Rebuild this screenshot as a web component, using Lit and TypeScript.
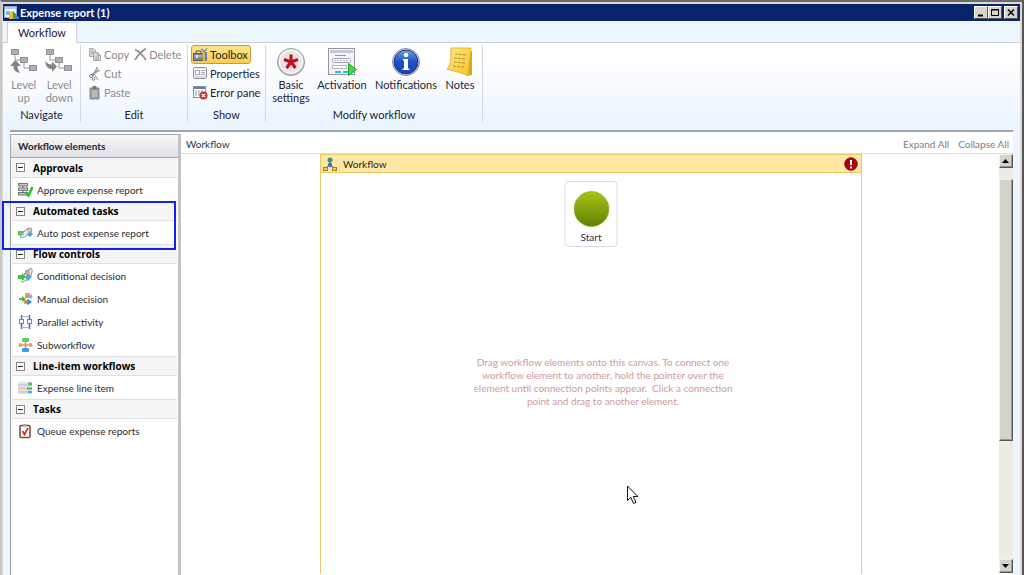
import { LitElement, html, svg, css, TemplateResult } from "lit";
import { customElement, property } from "lit/decorators.js";

const icon = (size: number, body: TemplateResult, box = size) =>
  html`<svg width=${size} height=${size} viewBox="0 0 ${box} ${box}" aria-hidden="true">${body}</svg>`;

const levelTree = svg`<g fill="#adadad" stroke="#929292"><rect x="1.5" y="1.5" width="7" height="5"/><rect x="10.5" y="9.5" width="7" height="5"/><rect x="19.5" y="17.5" width="7" height="5"/></g><path d="M5 7v5h5M14 15v5h5" fill="none" stroke="#999"/>`;

const icons: Record<string, TemplateResult> = {
  app: icon(15, svg`<rect x=".5" y="1.5" width="12" height="11" fill="#f4fbff" stroke="#8fa9d0"/><rect x="1" y="2" width="11" height="2" fill="#a9cdf0"/><rect x="2" y="6" width="4" height="4" fill="#79b4ec"/><path d="M5 14V9l3-3 2 2v6z" fill="#f1b929"/><path d="M9 14V6l3 3v5z" fill="#43a047"/><path d="M12 14v-4l3 2v2z" fill="#3e7bd6"/>`),
  up: icon(28, svg`${levelTree}<path d="M10 25C5 24 3 21 3.500 18H0l5.500-6 5.500 6H7.500c0 3 1 4 2.500 7z" fill="#858585"/>`),
  down: icon(28, svg`${levelTree}<path d="M0 13c1 6 3 8 7 8v3l5-5.500-5-5v3c-3 0-5-1-7-3.500z" fill="#858585"/>`),
  copy: icon(14, svg`<path d="M1.500.5h4l2 2v6h-6z" fill="#d6d6d6" stroke="#aaa"/><path d="M5.500 4.500h4l3 3v5h-7z" fill="#dcdcdc" stroke="#a2a2a2"/><path d="M9.500 4.500v3h3M7 9h4M7 11h4M3 3h2M3 5h2" fill="none" stroke="#a2a2a2"/>`),
  del: icon(13, svg`<path d="M1 1.500c4 2 8 6 11 10.500M12 .5C8 3 4 7 1 12" stroke="#8e8e8e" stroke-width="1.700" fill="none"/>`),
  cut: icon(14, svg`<path d="M9.500 0 5 9M11.500 3 3 8" stroke="#999" stroke-width="1.500"/><path d="m6 7 4 6" stroke="#888"/><circle cx="3" cy="9" r="1.600" fill="none" stroke="#888"/><circle cx="5.500" cy="12" r="1.400" fill="none" stroke="#888"/>`),
  paste: icon(14, svg`<rect x="1.500" y="1.500" width="10" height="12" rx="1" fill="#909090"/><rect x="3.500" y="4" width="6" height="7.500" fill="#b9b9b9"/><rect x="4.500" y="0" width="4" height="3" fill="#777"/>`),
  toolbox: icon(15, svg`<path d="M3 6V4h5v2" fill="none" stroke="#555"/><rect x=".5" y="6.500" width="10" height="7" fill="#7a879b" stroke="#4d5b70"/><path d="M1 9h9" stroke="#c5d0e0"/><rect x="3" y="8" width="2" height="3" fill="#e8e8e8"/><path d="M10.500 14V6" stroke="#e0a020" stroke-width="2"/><path d="M13 14V5" stroke="#5d7fb8" stroke-width="2"/><path d="M8.500 1.500 11 5l3-3.500" stroke="#8090a0" stroke-width="1.500" fill="none"/>`),
  properties: icon(15, svg`<rect x=".5" y="1.500" width="13" height="11" rx="1" fill="#f1f1f5" stroke="#8f8f9b"/><path d="M2.500 4.500h4v4h-4zM8.500 4.500h3M8.500 6.500h3M8.500 8.500h3" fill="#fff" stroke="#a3a3b0"/><path d="M1 11h12" stroke="#c9c9d2"/>`),
  error: icon(15, svg`<rect x=".5" y="1.500" width="12" height="11" fill="#fafcff" stroke="#8791a6"/><rect x="1" y="2" width="11" height="2" fill="#6d7f9f"/><path d="M2 6h2M5 6h2M8 6h2M2 8h2M5 8h2M2 10h2M5 10h2" stroke="#8c9bb5"/><circle cx="10.500" cy="10.500" r="4" fill="#d92c2c"/><path d="m8.800 8.800 3.400 3.400m0-3.400-3.400 3.400" stroke="#fff" stroke-width="1.200"/>`),
  basic: icon(30, svg`<defs><linearGradient id="b" x2="0" y2="1"><stop stop-color="#fdfdfd"/><stop offset="1" stop-color="#b9b9bd"/></linearGradient></defs><circle cx="15" cy="15" r="13.500" fill="url(#b)" stroke="#929298"/><circle cx="15" cy="15" r="11.500" fill="#e6e6e9" stroke="#fff"/><path d="M15 15V7.500M15 15l7-2.500M15 15l4.500 6M15 15l-4.500 6M15 15 8 12.500" stroke="#c30d16" stroke-width="3"/>`),
  activation: icon(30, svg`<rect x="1.500" y="1.500" width="26" height="26" fill="#f4f4f7" stroke="#9496a3"/><rect x="3" y="3" width="23" height="3" fill="#c6c8d2"/><path d="M8 8.500h11" stroke="#999"/><rect x="5.500" y="11.500" width="18" height="4" rx="1" fill="#fff" stroke="#a0a3ae"/><path d="M7 13.500h14" stroke="#b5b5bd" stroke-dasharray="2 1"/><rect x="5.500" y="18.500" width="14" height="3" fill="#fff" stroke="#b5b7c0"/><rect x="8" y="24" width="6" height="2" fill="#13c5ef"/><rect x="16" y="24" width="5" height="2" fill="#13c5ef"/><path d="m21.500 16.500 8 6-8 6z" fill="#43d343" stroke="#1fa52a"/>`),
  notify: icon(30, svg`<defs><linearGradient id="n" x2="0" y2="1"><stop stop-color="#6b9fe6"/><stop offset=".5" stop-color="#1e4fc0"/><stop offset="1" stop-color="#1a43b4"/></linearGradient></defs><circle cx="15" cy="15" r="13.500" fill="#dfe1e8" stroke="#8b8e99"/><circle cx="15" cy="15" r="12" fill="url(#n)" stroke="#1b3990"/><circle cx="15" cy="8" r="2.300" fill="#fff"/><path d="M12 12h5v9.500h1.500V23h-7v-1.500H13v-8h-1z" fill="#fff"/>`),
  notes: icon(30, svg`<defs><linearGradient id="y" x2="1" y2="1"><stop stop-color="#ffe989"/><stop offset="1" stop-color="#f5c226"/></linearGradient></defs><path d="m22 5 5-1v24l-6 1z" fill="#dca51c"/><path d="M6 1h20c-1 9-2 18-3 27L2 22c4-4 4-12 4-21z" fill="url(#y)" stroke="#e6b52b"/><path d="m10 7 11 1M9 11l12 1M9 15l11 1M8 19l11 1" stroke="#b8912f" stroke-dasharray="3 1"/>`),
  approve: icon(16, svg`<g fill="#c4c4c4" stroke="#777"><rect x=".5" y="1.500" width="9" height="2.500"/><rect x=".5" y="6" width="9" height="2.500"/><rect x=".5" y="10.500" width="9" height="2.500"/></g><path d="M5 4v2M5 8v3" stroke="#666"/><path d="m7.500 10 3 3.500L14.500 5" stroke="#25c51d" stroke-width="2.500" fill="none"/>`),
  auto: icon(16, svg`<rect x="0" y="6" width="6" height="4.500" fill="#5fcb45"/><rect x="9" y="3" width="4" height="4" fill="#f5ad78"/><path d="m8 9 4-3 3 3-3 3z" fill="#36aaf0"/><ellipse cx="8" cy="8" rx="7" ry="2.500" transform="rotate(-38 8 8)" fill="#d8dde3" fill-opacity=".5" stroke="#8899a8"/>`),
  cond: icon(16, svg`<rect x="7" y="2" width="5" height="5" fill="#f4a66e"/><path d="m7 9 3-3 4 3-4 4z" fill="#37a6eb"/><path d="M3 14C8 14 15 7 14 2S4 7 5 12" fill="none" stroke="#899eae" stroke-width="1.200"/><path d="M0 7h4V5l4 4-4 4v-2H0z" fill="#3fc53b"/>`),
  manual: icon(16, svg`<rect x="7" y="2" width="5" height="5" fill="#f29456"/><path d="m7 11 3-3 4 3-4 3z" fill="#2d92dc"/><circle cx="12.500" cy="5.500" r="2" fill="#7fb5dd"/><circle cx="7.500" cy="11" r="2" fill="#d88d51"/><path d="M1 7h3V5l4 3-4 3V9H1z" fill="#43bd40"/>`),
  parallel: icon(16, svg`<path d="M3.500 1v14M11.500 1v14" stroke="#3465cf" stroke-width="1.500"/><path d="M3.500 2.500h8M3.500 13.500h8" stroke="#a8b4ca"/><rect x="1.500" y="5.500" width="4" height="4" fill="#eef4ff" stroke="#6687c4"/><rect x="9.500" y="5.500" width="4" height="4" fill="#eef4ff" stroke="#6687c4"/>`),
  sub: icon(16, svg`<rect x="4" y="1" width="7" height="4" rx="1" fill="#5fcb6b"/><path d="M7.500 5v6M3 8h10" stroke="#bf8056"/><circle cx="2.500" cy="8" r="2" fill="#ee9d66"/><circle cx="7.500" cy="8" r="2" fill="#ee9d66"/><circle cx="12.500" cy="8" r="2" fill="#ee9d66"/><rect x="4" y="11" width="7" height="4" rx="1" fill="#35a0e6"/>`),
  line: icon(16, svg`<rect x="0" y="2" width="14" height="12" fill="#dfe5ee"/><path d="M0 5h9M0 12h11" stroke="#c6d2e4" stroke-width="2"/><path d="M0 8.500h9" stroke="#f3c594" stroke-width="2"/><path d="M10 4h4" stroke="#57c257" stroke-width="3"/><path d="M9 8.500h5" stroke="#3cb45a" stroke-width="2"/><path d="M10 12h4" stroke="#4da0ea" stroke-width="2"/>`),
  queue: icon(16, svg`<rect x="2" y="2.500" width="10" height="12" rx="1" fill="#fff" stroke="#7c5138" stroke-width="1.600"/><rect x="5" y="1" width="4" height="3" fill="#a9a9ae"/><path d="m4.500 8 2 3.500L10 5" stroke="#df2020" stroke-width="1.600" fill="none"/>`),
  flow: icon(16, svg`<path d="M8 4v5M3 12l5-3 5 3" stroke="#68829b" fill="none"/><circle cx="8" cy="4" r="2.500" fill="#2a9e63"/><circle cx="8" cy="9" r="2.200" fill="#4067cd"/><rect x="1.500" y="11.500" width="4" height="3" fill="#f6cd62" stroke="#ae7f20"/><rect x="10.500" y="11.500" width="4" height="3" fill="#f6cd62" stroke="#ae7f20"/>`),
  alert: icon(14, svg`<circle cx="7" cy="7" r="6.300" fill="#a8000c" stroke="#820008" stroke-width=".8"/><path d="M7 3v5" stroke="#fff" stroke-width="2"/><path d="M7 9.500v2" stroke="#fff" stroke-width="2"/>`),
  start: icon(36, svg`<defs><linearGradient id="g" x2="0" y2="1"><stop stop-color="#a2c613"/><stop offset="1" stop-color="#628007"/></linearGradient></defs><circle cx="18" cy="18" r="17.500" fill="url(#g)" stroke="#8bac25" stroke-width=".6"/>`),
  minus: icon(9, svg`<rect x=".5" y=".5" width="8" height="8" fill="#fff" stroke="#858585"/><path d="M2 4.500h5" stroke="#222"/>`),
  arrowUp: icon(8, svg`<path d="M0 6h7L3.500 2z" fill="#000"/>`),
  arrowDown: icon(8, svg`<path d="M0 2h7L3.500 6z" fill="#000"/>`),
};

const reset = css`
  * { box-sizing: border-box; }
  button { font: inherit; color: inherit; background: none; border: 0; margin: 0; padding: 0; text-align: inherit; }
  svg { display: block; flex: none; }
`;

@customElement("ribbon-button")
class RibbonButton extends LitElement {
  @property() icon = "";
  @property() label = "";
  @property({ type: Boolean, reflect: true }) large = false;
  @property({ type: Boolean }) disabled = false;
  @property({ type: Boolean }) pressed = false;
  static styles = [reset, css`
    :host { display: block; }
    .button { display: flex; align-items: center; gap: 2px; height: 19px; padding: 0 2px 0 1px; border: 1px solid transparent; border-radius: 3px; color: #1e2330; white-space: nowrap; }
    .large { flex-direction: column; gap: 1px; height: 60px; width: 100%; padding: 0; text-align: center; white-space: pre-line; line-height: 13px; }
    .large .glyph { display: grid; place-items: center; height: 30px; }
    .button:disabled { color: #8b8b8b; }
    .pressed { background: linear-gradient(#ffe58b, #fbce4c); border-color: #c79d3c; }
  `];
  render() {
    return html`<button class="button ${this.large ? "large" : ""} ${this.pressed ? "pressed" : ""}" ?disabled=${this.disabled}>
      <span class="glyph">${icons[this.icon]}</span><span>${this.label}</span></button>`;
  }
}

@customElement("ribbon-bar")
class RibbonBar extends LitElement {
  static styles = [reset, css`
    :host { display: block; background: linear-gradient(#fff 20%, #eaf4ff); padding-bottom: 8px; }
    .groups { display: flex; padding-top: 2px; }
    .group { display: flex; flex-direction: column; justify-content: space-between; height: 77px; border-right: 1px solid #d3d9e3; }
    .title { text-align: center; line-height: 15px; color: #1e2330; }
    .navigate { width: 78px; }
    .edit { width: 107px; }
    .show { width: 78px; }
    .modify { width: 217px; }
    .large { display: grid; padding: 1px 3px; }
    .navigate .large { grid-template-columns: 1fr 1fr; }
    .modify .large { grid-template-columns: 44px 58px 70px 38px; }
    .small { display: flex; flex-direction: column; padding: 0 3px; align-items: flex-start; }
    .edit .small { padding-left: 5px; }
    .row { display: flex; }
  `];
  render() {
    return html`<div class="groups">
      <section class="group navigate"><div class="large">
        <ribbon-button large disabled icon="up" .label=${"Level\nup"}></ribbon-button>
        <ribbon-button large disabled icon="down" .label=${"Level\ndown"}></ribbon-button>
      </div><div class="title">Navigate</div></section>
      <section class="group edit"><div class="small">
        <div class="row"><ribbon-button disabled icon="copy" label="Copy"></ribbon-button><ribbon-button disabled icon="del" label="Delete"></ribbon-button></div>
        <ribbon-button disabled icon="cut" label="Cut"></ribbon-button>
        <ribbon-button disabled icon="paste" label="Paste"></ribbon-button>
      </div><div class="title">Edit</div></section>
      <section class="group show"><div class="small">
        <ribbon-button pressed icon="toolbox" label="Toolbox"></ribbon-button>
        <ribbon-button icon="properties" label="Properties"></ribbon-button>
        <ribbon-button icon="error" label="Error pane"></ribbon-button>
      </div><div class="title">Show</div></section>
      <section class="group modify"><div class="large">
        <ribbon-button large icon="basic" .label=${"Basic\nsettings"}></ribbon-button>
        <ribbon-button large icon="activation" label="Activation"></ribbon-button>
        <ribbon-button large icon="notify" label="Notifications"></ribbon-button>
        <ribbon-button large icon="notes" label="Notes"></ribbon-button>
      </div><div class="title">Modify workflow</div></section>
    </div>`;
  }
}

const sections = [
  { title: "Approvals", items: [["approve", "Approve expense report"]] },
  { title: "Automated tasks", marked: true, items: [["auto", "Auto post expense report"]] },
  { title: "Flow controls", items: [["cond", "Conditional decision"], ["manual", "Manual decision"], ["parallel", "Parallel activity"], ["sub", "Subworkflow"]] },
  { title: "Line-item workflows", items: [["line", "Expense line item"]] },
  { title: "Tasks", items: [["queue", "Queue expense reports"]] },
];

@customElement("element-toolbox")
class ElementToolbox extends LitElement {
  static styles = [reset, css`
    :host { display: block; background: #fff; border: 1px solid #a3a5ad; border-right: 3px solid #c3c3c5; border-bottom: 0; font-size: 10px; margin-right: 1px; }
    .heading { margin: 0; height: 23px; line-height: 23px; padding-left: 7px; font-size: 10px; color: #25252d; background: linear-gradient(#f8f8fa, #dfdfe7); border-bottom: 1px solid #a3a5ad; }
    .section { position: relative; padding: 0 1px; }
    .toggle { display: flex; align-items: center; gap: 8px; width: 100%; height: 20px; padding-left: 4px; font-family: "Open Sans", "Noto Sans", sans-serif; font-weight: 700; color: #000; background: #f5f5f5; border-bottom: 1px solid #dde0e5; }
    .section + .section .toggle { border-top: 1px solid #dde0e5; }
    .list { list-style: none; margin: 0; padding: 0; }
    .item { display: flex; align-items: center; gap: 3px; width: 100%; height: 23px; padding: 1px 0 0 6px; color: #2d2d2d; white-space: nowrap; }
    .mark { position: absolute; inset: 0 2px -6px -9px; border: 2px solid #1020f0; pointer-events: none; z-index: 1; }
  `];
  render() {
    return html`<h2 class="heading">Workflow elements</h2>
      ${sections.map((s) => html`<section class="section">
        <button class="toggle" aria-expanded="true">${icons.minus}${s.title}</button>
        <ul class="list">${s.items.map(([i, label]) => html`<li><button class="item">${icons[i]}${label}</button></li>`)}</ul>
        ${s.marked ? html`<div class="mark"></div>` : ""}
      </section>`)}`;
  }
}

@customElement("workflow-canvas")
class WorkflowCanvas extends LitElement {
  static styles = [reset, css`
    :host { display: flex; flex-direction: column; min-width: 0; background: #fff; font-size: 10px; color: #2b3348; }
    .bar { display: flex; align-items: center; gap: 9px; height: 20px; padding: 0 4px; border-bottom: 1px solid #dfe1f2; }
    .crumb { flex: 1; }
    .link { color: #808080; }
    .body { flex: 1; display: flex; min-height: 0; }
    .area { flex: 1; display: flex; padding: 0 137px 1px 138px; }
    .surface { flex: 1; position: relative; border: 1px solid #ecc868; border-bottom: 0; }
    .title { display: flex; align-items: center; gap: 5px; height: 18px; padding: 0 3px 0 1px; background: #ffe8a3; border-bottom: 1px solid #ecc868; color: #222; }
    .name { flex: 1; }
    .node { position: absolute; top: 26px; left: 50%; transform: translateX(-50%); display: flex; flex-direction: column; align-items: center; gap: 3px; width: 53px; height: 66px; padding-top: 9px; background: #fff; border: 1px solid #d9d9e8; border-radius: 4px; }
    .hint { position: absolute; top: 201px; left: 24px; right: 0; margin: 0; text-align: center; line-height: 13px; color: #cf9a9e; white-space: pre-line; }
    .pointer { position: absolute; left: 305px; top: 330px; }
    .scroll { display: flex; flex-direction: column; width: 14px; margin-bottom: 2px; background: #eeebe6; }
    .step { display: grid; place-items: center; height: 14px; }
    .step, .thumb { background: #d5d2cc; border: 1px solid; border-color: #f2f0ec #555 #555 #f2f0ec; box-shadow: inset -1px -1px #999; }
    .gap { flex: 11; }
    .thumb { flex: 261; }
    .rest { flex: 119; }
  `];
  render() {
    return html`<div class="bar"><span class="crumb">Workflow</span><button class="link">Expand All</button><button class="link">Collapse All</button></div>
      <div class="body">
        <div class="area"><div class="surface">
          <div class="title">${icons.flow}<span class="name">Workflow</span>${icons.alert}</div>
          <button class="node">${icons.start}<span>Start</span></button>
          <p class="hint">${"Drag workflow elements onto this canvas. To connect one\nworkflow element to another, hold the pointer over the\nelement until connection points appear.\u00a0 Click a connection\npoint and drag to another element."}</p>
          <svg class="pointer" width="13" height="20" viewBox="0 0 13 20" aria-hidden="true"><path d="M1.500 1v14.500l3.300-3.200 2.700 6.200 2.500-1.100-2.700-5.900h4.500z" fill="#fff" stroke="#111"/></svg>
        </div></div>
        <div class="scroll"><button class="step" aria-label="Scroll up">${icons.arrowUp}</button><div class="gap"></div><div class="thumb"></div><div class="rest"></div><button class="step" aria-label="Scroll down">${icons.arrowDown}</button></div>
      </div>`;
  }
}

@customElement("app-root")
class AppRoot extends LitElement {
  static styles = [reset, css`
    :host { display: flex; flex-direction: column; height: 100vh; box-sizing: border-box; font: 11px/14px Lato, "Open Sans", sans-serif; background: #edf5ff; border: solid; border-width: 2px 2px 0; border-color: #6b6a64 #55555a transparent #c8c8c8; cursor: default; }
    .window { flex: 1; display: flex; flex-direction: column; min-height: 0; border: solid #dedbd6; border-width: 2px 2px 0 1px; }
    .titlebar { display: flex; align-items: center; gap: 1px; height: 17px; padding: 0 2px 0 1px; background: #0a246a; color: #fff; }
    .name { flex: 1; margin: 0; font-size: 11px; font-weight: 700; }
    .controls { display: flex; }
    .control { display: grid; place-items: center; width: 14px; height: 13px; background: #d8d5cf; border: 1px solid; border-color: #fff #555 #555 #fff; }
    .control:last-child { margin-left: 2px; }
    .tabs { display: flex; align-items: flex-end; height: 22px; padding-left: 4px; border-bottom: 1px solid #c8cfe0; }
    .tab { width: 70px; height: 21px; margin-bottom: -1px; text-align: center; background: #fff; border: 1px solid #c8cfe0; border-bottom: 0; color: #1e2330; }
    .work { flex: 1; display: grid; grid-template-columns: 172px 1fr; min-height: 0; margin: 0 7px; padding-top: 2px; border-top: 2px solid #a1a5af; background: #fff; }
  `];
  render() {
    return html`<div class="window">
      <header class="titlebar">${icons.app}<h1 class="name">Expense report (1)</h1>
        <div class="controls">
          <button class="control" aria-label="Minimize"><svg width="10" height="9"><path d="M2 7.500h5" stroke="#000" stroke-width="2"/></svg></button>
          <button class="control" aria-label="Maximize"><svg width="10" height="9"><path d="M1.500 1.500h7v6h-7zM1 2h8" fill="none" stroke="#000"/></svg></button>
          <button class="control" aria-label="Close"><svg width="10" height="9"><path d="m2 1.500 6 6m0-6-6 6" stroke="#000" stroke-width="1.500"/></svg></button>
        </div></header>
      <nav class="tabs"><button class="tab">Workflow</button></nav>
      <ribbon-bar></ribbon-bar>
      <main class="work"><element-toolbox></element-toolbox><workflow-canvas></workflow-canvas></main>
    </div>`;
  }
}
